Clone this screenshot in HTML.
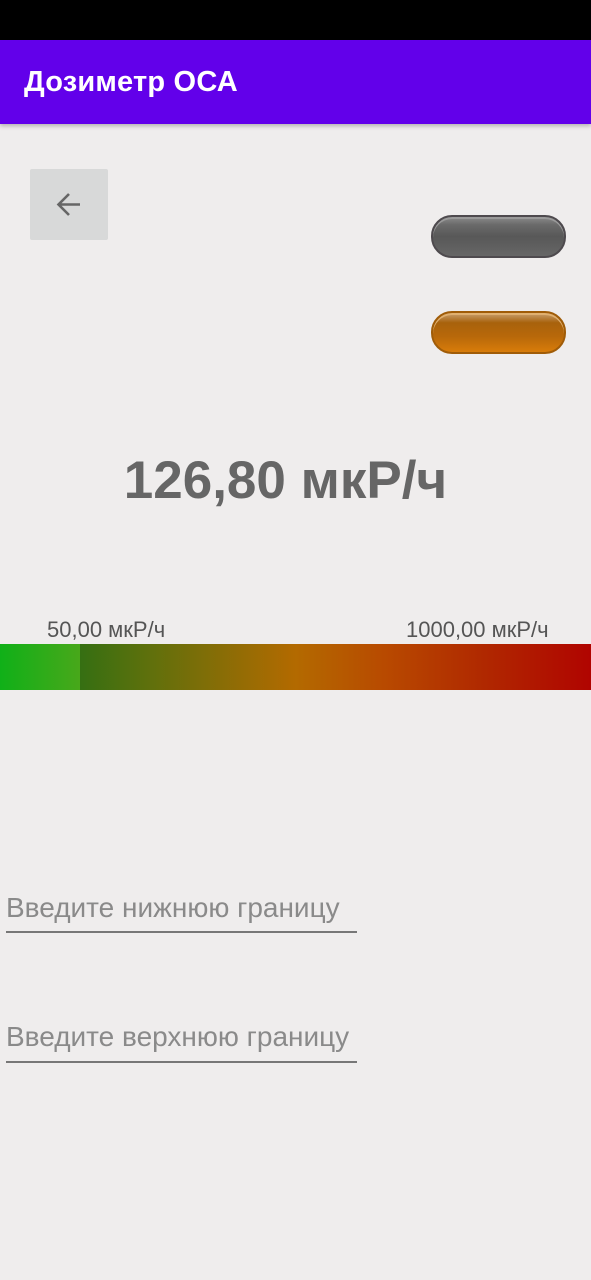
<!DOCTYPE html>
<html><head><meta charset="utf-8">
<style>
html,body{margin:0;padding:0;}
body{width:591px;height:1280px;position:relative;overflow:hidden;background:#efeded;font-family:"Liberation Sans",sans-serif;}
.abs{position:absolute;}
#status{left:0;top:0;width:591px;height:40px;background:#000;}
#bar{left:0;top:40px;width:591px;height:84px;background:#6200ea;box-shadow:0 2px 4px rgba(0,0,0,.25);}
#title{left:24px;top:66px;color:#fff;font-size:29px;font-weight:bold;letter-spacing:0.2px;}
#back{left:30px;top:169px;width:78px;height:71px;background:#d8d9d9;border-radius:2px;}
.pill{left:431px;width:131px;height:39px;border-radius:21px;border:2px solid;}
#p1{top:215px;border-color:#4e4a4e;background:linear-gradient(#8a8a8a 0%,#6a6a6a 20%,#585858 50%,#666 100%);box-shadow:inset 0 2px 0 #9a9a9a;}
#p2{top:311px;border-color:#a05c08;background:linear-gradient(#c9a070 0%,#a8620c 25%,#b8680a 60%,#d87c0a 100%);box-shadow:inset 0 2px 0 #e0b070;}
#val{left:0;width:571px;text-align:center;top:450px;font-size:53px;font-weight:bold;color:#666;}
.lbl{top:617px;font-size:22px;color:#555;}
#grad{left:0;top:644px;width:591px;height:46px;background:linear-gradient(90deg,#356f12 13.5%,#5e700c 25%,#b36a00 50%,#b84a00 65%,#b02800 82%,#b00400 100%);}
#green{left:0;top:644px;width:80px;height:46px;background:linear-gradient(90deg,#10b018,#48a81a);}
.in{left:6px;font-size:28px;color:#8a8a8a;}
.ln{left:6px;width:351px;height:2px;background:#777;}
</style></head><body>
<div class="abs" id="status"></div>
<div class="abs" id="bar"></div>
<div class="abs" id="title">Дозиметр ОСА</div>
<div class="abs" id="back"><svg width="78" height="71" viewBox="0 0 78 71"><path d="M50 35.5H28M39 25L28.5 35.5L39 46" fill="none" stroke="#666" stroke-width="2.6"/></svg></div>
<div class="abs pill" id="p1"></div>
<div class="abs pill" id="p2"></div>
<div class="abs" id="val">126,80 мкР/ч</div>
<div class="abs lbl" style="left:47px">50,00 мкР/ч</div>
<div class="abs lbl" style="left:406px">1000,00 мкР/ч</div>
<div class="abs" id="grad"></div>
<div class="abs" id="green"></div>
<div class="abs in" style="top:892px">Введите нижнюю границу</div>
<div class="abs ln" style="top:931px"></div>
<div class="abs in" style="top:1021px">Введите верхнюю границу</div>
<div class="abs ln" style="top:1061px"></div>
</body></html>
